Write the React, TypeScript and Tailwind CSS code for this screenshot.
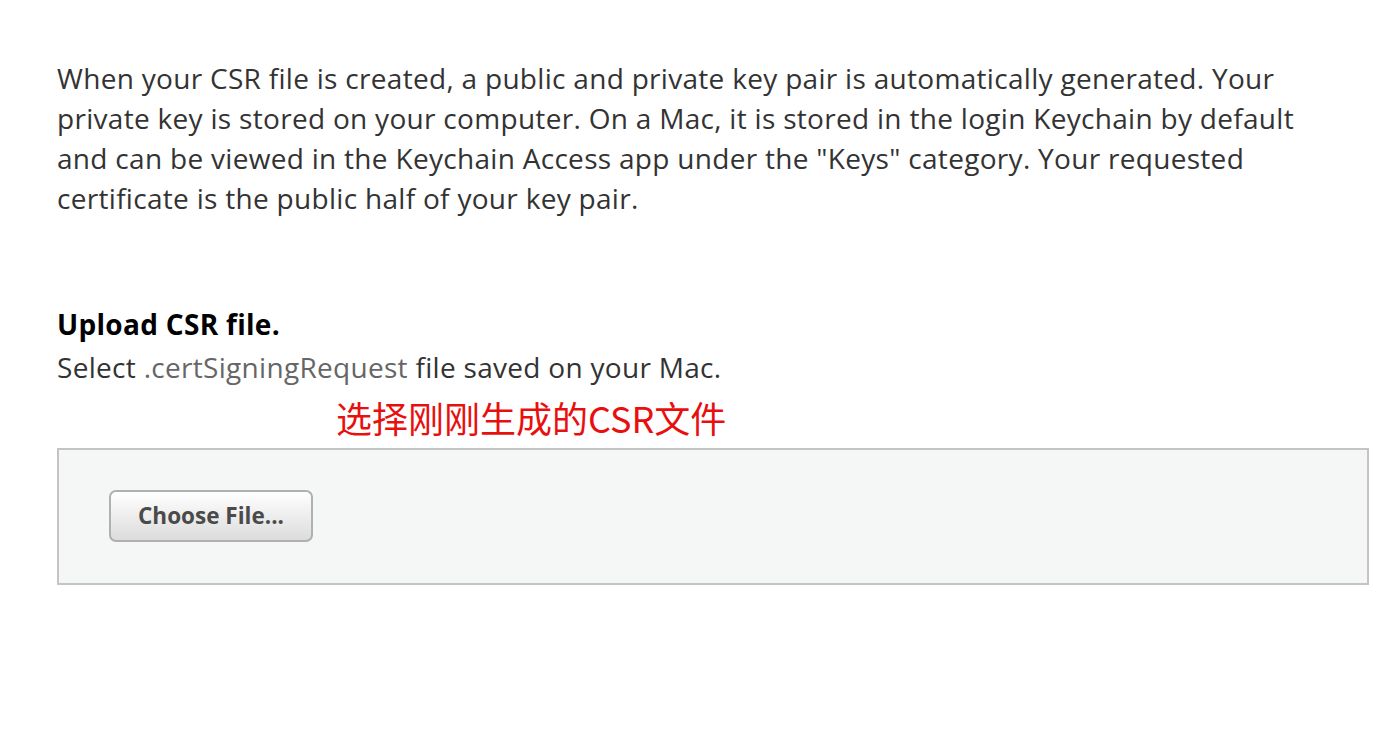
export default function App() {
  return (
    <div className="min-h-[750px] bg-white text-[#333] font-['Open_Sans','Noto_Sans_CJK_SC',sans-serif]">
      <div className="pl-[57px] pr-[27px] pt-[58px]">
        <p className="text-[28px] leading-[40px] tracking-[0.3px]">
          When your CSR file is created, a public and private key pair is automatically generated. Your
          <br />
          private key is stored on your computer. On a Mac, it is stored in the login Keychain by default
          <br />
          and can be viewed in the Keychain Access app under the "Keys" category. Your requested
          <br />
          certificate is the public half of your key pair.
        </p>

        <h3 className="mt-[89px] text-[28px] font-bold leading-[34px] tracking-[0.3px] text-black">Upload CSR file.</h3>
        <p className="mt-[9px] text-[28px] leading-[34px] tracking-[0.3px]">
          Select <span className="text-[#666]">.certSigningRequest</span> file saved on your Mac.
        </p>
        <p className="ml-[279px] mt-[11px] text-[36px] leading-[44px] text-[#e8100f] font-['Noto_Sans_CJK_SC',sans-serif]">
          选择刚刚生成的CSR文件
        </p>

        <div className="mt-[9px] h-[137px] border-2 border-[#c4c4c4] bg-[#f5f6f6] pl-[50px] pt-[40px]">
          <button className="h-[52px] w-[204px] rounded-[7px] border-2 border-[#b0b0b0] bg-gradient-to-b from-white to-[#dcdcdc] text-[22.5px] font-bold text-[#4a4a4a]">
            Choose File...
          </button>
        </div>
      </div>
    </div>
  );
}
